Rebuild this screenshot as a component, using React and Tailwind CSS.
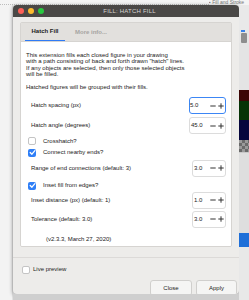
import { useState } from 'react';

const font = { fontFamily: '"Liberation Sans", Arial, Helvetica, sans-serif' };

function Check({ on }) {
  return (
    <div
      className={`w-[8px] h-[8px] rounded-[2px] flex items-center justify-center shrink-0 ${
        on ? 'bg-[#2f7ff7]' : 'bg-white border border-[#c4c4c4]'
      }`}
    >
      {on && (
        <svg width="7" height="7" viewBox="0 0 7 7">
          <path d="M1.2 3.5 L2.9 5.2 L5.9 1.7" fill="none" stroke="white" strokeWidth="1.3" strokeLinecap="round" strokeLinejoin="round" />
        </svg>
      )}
    </div>
  );
}

function Spin({ value, focused, wide }) {
  return (
    <div
      className={`flex items-center h-[17px] rounded-[3px] bg-white ${wide ? 'w-[37px]' : 'w-[34px]'} ${
        focused ? 'border-[1.5px] border-[#3c86f5]' : 'border border-[#dcdcdc]'
      }`}
    >
      <span className={`flex-1 ${focused ? 'pl-0' : 'pl-[1px]'} text-[6px] text-[#222]`}>{value}</span>
      <svg width="6" height="6" viewBox="0 0 6 6" className="mr-[2px]">
        <path d="M0.3 3 H5.7" stroke="#333" strokeWidth="1" />
      </svg>
      <svg width="6" height="6" viewBox="0 0 6 6" className="mr-[1.5px]">
        <path d="M0.3 3 H5.7 M3 0.3 V5.7" stroke="#333" strokeWidth="1" />
      </svg>
    </div>
  );
}

function SpinRow({ label, value, focused, wide, className = '' }) {
  return (
    <div className={`flex items-center justify-between pl-[5px] ${className}`}>
      <span>{label}</span>
      <Spin value={value} focused={focused} wide={wide} />
    </div>
  );
}

function CheckRow({ label, on, className = '' }) {
  return (
    <div className={`flex items-center gap-[7px] pl-[2px] h-[8px] ${className}`}>
      <Check on={on} />
      <span>{label}</span>
    </div>
  );
}

export default function App() {
  const [tab] = useState('hatch');

  return (
    <div className="w-[249px] h-[300px] overflow-hidden flex flex-col bg-[#f2f2f2] text-[#222]" style={font}>
      {/* strip behind the window, top */}
      <div className="h-[5px] flex shrink-0 bg-[#f4f4f4]">
        <div className="flex-1 border-b border-dotted border-[#bdbdbd]" />
        <div className="w-[40px] text-[5px] leading-[5px] text-[#777] whitespace-nowrap overflow-hidden">▪ Fill and Stroke</div>
      </div>

      <div className="flex flex-1">
        <div className="w-[13px] bg-[#f3f3f3] border-r border-[#e2e2e2]" />

        <div className="w-[226px] flex flex-col">
          {/* window */}
          <div className="h-[289px] flex flex-col rounded-[4px] overflow-hidden bg-[#edecea] shadow-[0_1px_4px_rgba(0,0,0,0.45)]">
            <div className="h-[12px] shrink-0 bg-[#4a4846] flex items-center">
              <div className="flex gap-[4px] pl-[5px]">
                <div className="w-[6px] h-[6px] rounded-full bg-[#fe5f57]" />
                <div className="w-[6px] h-[6px] rounded-full bg-[#febc2e]" />
                <div className="w-[6px] h-[6px] rounded-full bg-[#28c840]" />
              </div>
              <div className="flex-1 text-center text-[6px] tracking-[0.2px] text-[#d6d4d2] pr-[24px]">FILL: HATCH FILL</div>
            </div>

            <div className="flex-1 flex flex-col px-[7px] pt-[5px]">
              <div className="h-[225px] flex flex-col border border-[#d6d4d1] rounded-[2px] overflow-hidden">
                <div className="h-[19px] shrink-0 bg-[#e2e0dd] flex items-stretch pl-[4px] text-[6px] border-b border-[#d6d4d1]">
                  <div className={`w-[40px] flex items-center justify-center font-bold ${tab === 'hatch' ? 'border-b-[1.5px] border-[#2f7bf5]' : ''}`}>
                    Hatch Fill
                  </div>
                  <div className="flex items-center pl-[10px] font-bold text-[#a6a4a2]">More info...</div>
                </div>

                <div className="flex-1 bg-white flex flex-col pl-[5px] pr-[5px] pt-[10px] text-[6px]">
                  <p className="leading-[6.3px]">
                    This extension fills each closed figure in your drawing
                    <br />with a path consisting of back and forth drawn "hatch" lines.
                    <br />If any objects are selected, then only those selected objects
                    <br />will be filled.
                  </p>
                  <p className="leading-[6.3px] mt-[6.5px]">Hatched figures will be grouped with their fills.</p>

                  <SpinRow className="mt-[7.5px]" label="Hatch spacing (px)" value="5.0" focused wide />
                  <SpinRow className="mt-[3px]" label="Hatch angle (degrees)" value="45.0" wide />
                  <CheckRow className="mt-[3px]" label="Crosshatch?" />
                  <CheckRow className="mt-[3.5px]" label="Connect nearby ends?" on />
                  <SpinRow className="mt-[3px]" label="Range of end connections (default: 3)" value="3.0" />
                  <CheckRow className="mt-[5px]" label="Inset fill from edges?" on />
                  <SpinRow className="mt-[2px]" label="Inset distance (px) (default: 1)" value="1.0" />
                  <SpinRow className="mt-[2px]" label="Tolerance (default: 3.0)" value="3.0" />
                  <p className="mt-[7px] pl-[20px]">(v2.3.3, March 27, 2020)</p>
                </div>
              </div>
            </div>

            <div className="h-[37px] shrink-0 border-t border-[#dcdad8] flex flex-col">
              <div className="flex items-center gap-[3px] pl-[9px] mt-[7px] text-[6px]">
                <Check />
                <span>Live preview</span>
              </div>
              <div className="flex justify-end gap-[4px] pr-[2px] mt-[6px]">
                <div className="w-[42px] h-[16px] rounded-[3px] border border-[#d0cfcd] bg-[#f5f5f4] flex items-center justify-center text-[6px]">Close</div>
                <div className="w-[41px] h-[16px] rounded-[3px] border border-[#d0cfcd] bg-[#f5f5f4] flex items-center justify-center text-[6px]">Apply</div>
              </div>
            </div>
          </div>
          <div className="flex-1 bg-[#cfcfcf]" />
        </div>

        {/* app panel peeking out on the right */}
        <div className="w-[10px] flex flex-col bg-[#e6e6e6]">
          <div className="h-[25px] bg-[#e9e9e9]" />
          <div className="h-[2px] w-[4px] ml-[2px] bg-[#3a82e8]" />
          <div className="h-[10px] w-[6px] ml-[2px] mt-[1px] bg-[#8e8e8e] rounded-[1px]" />
          <div className="h-[47px] bg-[#e4e4e4]" />
          <div className="h-[11px] bg-[#3c0505]" />
          <div className="h-[19px] bg-[#063306]" />
          <div className="h-[20px] bg-[#05053d]" />
          <div className="h-[12px] bg-[repeating-conic-gradient(#6a6a6a_0_25%,#9a9a9a_0_50%)] bg-[length:6px_6px]" />
          <div className="h-[81px] bg-[#dedede] border-t border-[#c9c9c9]" />
          <div className="h-[14px] bg-[#1f6fd8]" />
          <div className="flex-1 bg-[#e8e8e8]" />
        </div>
      </div>
    </div>
  );
}
